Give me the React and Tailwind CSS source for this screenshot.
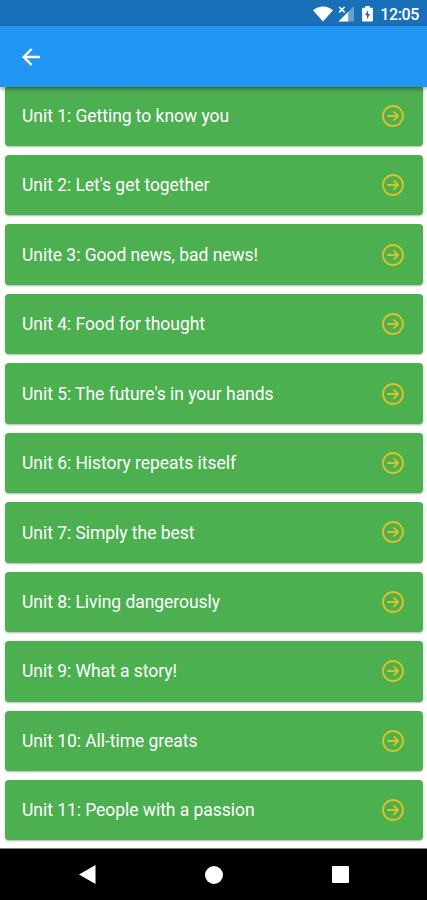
const units = [
  "Unit 1: Getting to know you",
  "Unit 2: Let's get together",
  "Unite 3: Good news, bad news!",
  "Unit 4: Food for thought",
  "Unit 5: The future's in your hands",
  "Unit 6: History repeats itself",
  "Unit 7: Simply the best",
  "Unit 8: Living dangerously",
  "Unit 9: What a story!",
  "Unit 10: All-time greats",
  "Unit 11: People with a passion",
];

function StatusBar() {
  return (
    <div className="flex h-[26px] shrink-0 items-center justify-end bg-[#1a70b8] pt-[2px] pr-[8px] text-white">
      <svg width="20" height="16" viewBox="0 0 19 16" preserveAspectRatio="none" fill="currentColor">
        <path d="M0 4.2C5.2-.9 13.8-.9 19 4.2L9.5 15.6z" />
      </svg>
      <svg className="ml-[5px]" width="16" height="16" viewBox="0 0 16 16" fill="currentColor">
        <path d="M16 0v15.4H.6z" opacity="0.35" />
        <path d="M10.2 5.8v9.6H.6z" />
        <path d="M1.2 1l5.4 5.4M6.6 1L1.2 6.4" stroke="currentColor" strokeWidth="1.5" />
      </svg>
      <svg className="ml-[8px]" width="11" height="16" viewBox="0 0 11 16">
        <path
          d="M3.3 0h4.4v1.8h2.1c.6 0 1.1.5 1.1 1.1v11.6c0 .6-.5 1.1-1.1 1.1H1.2c-.6 0-1.1-.5-1.1-1.1V2.9c0-.6.5-1.1 1.1-1.1h2.1z"
          fill="currentColor"
        />
        <path d="M6.1 4L2.9 9.3h2v4L8.1 8h-2z" fill="#1a70b8" />
      </svg>
      <span className="ml-[7px] pt-[1px] text-[16px] leading-none font-medium tracking-[-0.35px]">12:05</span>
    </div>
  );
}

function AppBar() {
  return (
    <header className="relative z-10 flex h-[61px] shrink-0 items-center bg-[#2196f3] pl-[22px] text-white shadow-[0_2px_4px_rgba(0,0,0,0.4)]">
      <button aria-label="Back">
        <svg width="18" height="18" viewBox="0 0 18 18" fill="none" stroke="currentColor" strokeWidth="2.4">
          <path d="M18 9H2M9.6 1L1.6 9l8 8" />
        </svg>
      </button>
    </header>
  );
}

function ArrowCircle() {
  return (
    <svg
      width="24"
      height="24"
      viewBox="0 0 24 24"
      fill="none"
      stroke="#dac324"
      strokeWidth="1.8"
      strokeLinecap="round"
      strokeLinejoin="round"
    >
      <circle cx="12" cy="12" r="10" />
      <path d="M7 12h10M13 7.8L17.2 12L13 16.2" />
    </svg>
  );
}

function UnitCard({ title }) {
  return (
    <li className="flex h-[60.45px] shrink-0 items-center justify-between rounded-[4px] bg-[#4caf50] pr-[18px] pl-[17px] shadow-[0_1px_2px_rgba(0,0,0,0.3)]">
      <span className="pt-[1.6px] text-[17.5px] leading-none tracking-[-0.04px] whitespace-nowrap text-white">
        {title}
      </span>
      <ArrowCircle />
    </li>
  );
}

function NavBar() {
  return (
    <nav className="flex h-[52px] shrink-0 items-center justify-between border-t border-[#808080] bg-black pr-[78px] pl-[79px] text-white">
      <svg width="17" height="19" viewBox="0 0 17 19" fill="currentColor">
        <path d="M16.5 0v19L0 9.5z" />
      </svg>
      <div className="size-[18px] rounded-full bg-white" />
      <div className="size-[17px] rounded-[1px] bg-white" />
    </nav>
  );
}

export default function App() {
  return (
    <div className="flex h-[900px] w-[427px] flex-col overflow-hidden bg-white font-['Roboto',sans-serif]">
      <StatusBar />
      <AppBar />
      <main className="min-h-0 flex-1 overflow-hidden">
        <ul className="-mt-[1.4px] flex flex-col gap-[9px] pr-[4px] pl-[5px]">
          {units.map((title) => (
            <UnitCard key={title} title={title} />
          ))}
        </ul>
      </main>
      <NavBar />
    </div>
  );
}
